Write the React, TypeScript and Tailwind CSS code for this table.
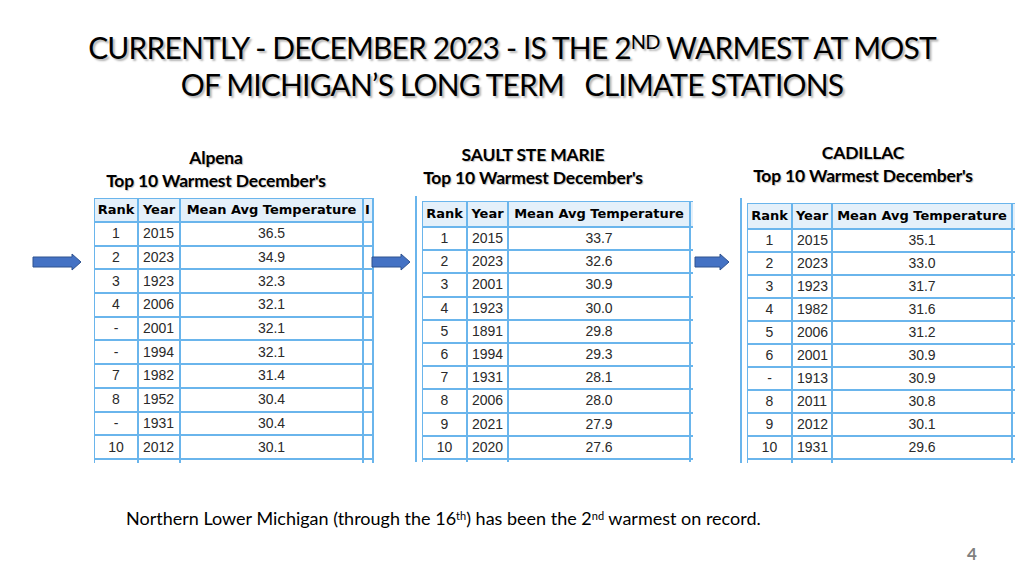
import React from 'react'

type Row = [string, string, string]

const alpena: Row[] = [
  ['1', '2015', '36.5'],
  ['2', '2023', '34.9'],
  ['3', '1923', '32.3'],
  ['4', '2006', '32.1'],
  ['-', '2001', '32.1'],
  ['-', '1994', '32.1'],
  ['7', '1982', '31.4'],
  ['8', '1952', '30.4'],
  ['-', '1931', '30.4'],
  ['10', '2012', '30.1'],
]

const sault: Row[] = [
  ['1', '2015', '33.7'],
  ['2', '2023', '32.6'],
  ['3', '2001', '30.9'],
  ['4', '1923', '30.0'],
  ['5', '1891', '29.8'],
  ['6', '1994', '29.3'],
  ['7', '1931', '28.1'],
  ['8', '2006', '28.0'],
  ['9', '2021', '27.9'],
  ['10', '2020', '27.6'],
]

const cadillac: Row[] = [
  ['1', '2015', '35.1'],
  ['2', '2023', '33.0'],
  ['3', '1923', '31.7'],
  ['4', '1982', '31.6'],
  ['5', '2006', '31.2'],
  ['6', '2001', '30.9'],
  ['-', '1913', '30.9'],
  ['8', '2011', '30.8'],
  ['9', '2012', '30.1'],
  ['10', '1931', '29.6'],
]

function Arrow({ w }: { w: number }) {
  return (
    <svg width={w} height={18} viewBox={`0 0 ${w} 18`} className="block">
      <polygon
        points={`1,4 ${w - 10},4 ${w - 10},1 ${w - 1},9 ${w - 10},17 ${w - 10},14 1,14`}
        fill="#4472c4"
        stroke="#2f528f"
        strokeWidth="1"
      />
    </svg>
  )
}

function ClimateTable({
  rows,
  cols,
  headH,
  rowH,
  extra = '',
}: {
  rows: Row[]
  cols: number[]
  headH: string
  rowH: string
  extra?: string
}) {
  const cell = 'border-2 border-[#6ab5ec] p-0 whitespace-nowrap overflow-hidden'
  const total = cols.reduce((a, b) => a + b, 0)
  return (
    <table className="border-collapse table-fixed -ml-px -mt-px" style={{ width: total }}>
      <colgroup>
        {cols.map((c, i) => (
          <col key={i} style={{ width: c }} />
        ))}
      </colgroup>
      <thead>
        <tr className={`${headH} bg-[#e4f0fa] font-['DejaVu_Sans',sans-serif] font-bold text-[13px] text-black`}>
          <th className={`${cell} text-center`}>Rank</th>
          <th className={`${cell} text-center`}>Year</th>
          <th className={`${cell} text-center`}>Mean Avg Temperature</th>
          <th className={`${cell} text-left pl-px`}>{extra}</th>
        </tr>
      </thead>
      <tbody className="font-['Liberation_Sans',Arial,sans-serif] text-[14px] text-[#2a2a2a]">
        {rows.map((r, i) => (
          <tr key={i} className={rowH}>
            <td className={`${cell} text-center`}>{r[0]}</td>
            <td className={`${cell} text-left pl-[4px]`}>{r[1]}</td>
            <td className={`${cell} text-center`}>{r[2]}</td>
            <td className={cell}></td>
          </tr>
        ))}
        <tr className={rowH}>
          <td className={cell}></td>
          <td className={cell}></td>
          <td className={cell}></td>
          <td className={cell}></td>
        </tr>
      </tbody>
    </table>
  )
}

function Heading({ name, w, mt, mb }: { name: string; w: string; mt: string; mb: string }) {
  return (
    <div
      className={`${w} ${mt} ${mb} text-center font-['Lato',sans-serif] font-bold text-[17.5px] leading-[23px] text-black tracking-[-0.01em] [text-shadow:1px_1px_1px_rgba(0,0,0,0.25)]`}
    >
      <div>{name}</div>
      <div>Top 10 Warmest December's</div>
    </div>
  )
}

export default function App() {
  return (
    <div className="w-[1024px] h-[576px] bg-white flex flex-col overflow-hidden relative">
      {/* Title */}
      <div className="pt-[29px] text-center font-['Lato',sans-serif] text-[30px] leading-[37px] text-black tracking-[-0.028em] [text-shadow:2px_2px_2px_rgba(0,0,0,0.3)]">
        <div>
          CURRENTLY - DECEMBER 2023 - IS THE 2<sup className="text-[20px]">ND</sup> WARMEST AT MOST
        </div>
        <div>OF MICHIGAN’S LONG TERM&nbsp;&nbsp; CLIMATE STATIONS</div>
      </div>

      {/* Tables */}
      <div className="flex items-start mt-[38px]">
        {/* Alpena */}
        <div className="flex items-start pl-[32px]">
          <div className="mt-[112px]">
            <Arrow w={50} />
          </div>
          <div className="ml-[12px] -mr-[4px]">
            <Heading name="Alpena" w="w-[244px]" mt="mt-[5px]" mb="mb-[6px]" />
            <div className="w-[280px] h-[265px] overflow-hidden">
              <ClimateTable rows={alpena} cols={[44, 42, 183, 10]} headH="h-[24px]" rowH="h-[23.7px]" extra="I" />
            </div>
          </div>
        </div>

        {/* Sault Ste Marie */}
        <div className="flex items-start ml-px">
          <div className="mt-[112px]">
            <Arrow w={40} />
          </div>
          <div className="ml-[4px]">
            <Heading name="SAULT STE MARIE" w="w-[236px]" mt="mt-[2px]" mb="mb-[7px]" />
            <div className="border-l-2 border-[#6ab5ec] pl-[5px] pt-[5px] h-[266px]">
              <div className="w-[271px] h-[261px] overflow-hidden">
                <ClimateTable rows={sault} cols={[45, 41, 182, 6]} headH="h-[26px]" rowH="h-[23.2px]" />
              </div>
            </div>
          </div>
        </div>

        {/* Cadillac */}
        <div className="flex items-start ml-px">
          <div className="mt-[112px]">
            <Arrow w={36} />
          </div>
          <div className="ml-[10px]">
            <Heading name="CADILLAC" w="w-[246px]" mt="mt-0" mb="mb-[11px]" />
            <div className="border-l-2 border-[#6ab5ec] pl-[5px] pt-[5px] h-[265px]">
              <div className="w-[268px] h-[260px] overflow-hidden">
                <ClimateTable rows={cadillac} cols={[45, 40, 180, 6]} headH="h-[26px]" rowH="h-[23px]" />
              </div>
            </div>
          </div>
        </div>
      </div>

      {/* Footer note */}
      <div className="mt-[44px] pl-[126px] font-['Lato',sans-serif] text-[18px] leading-[22px] text-black">
        Northern Lower Michigan (through the 16<sup className="text-[11px]">th</sup>) has been the 2
        <sup className="text-[11px]">nd</sup> warmest on record.
      </div>

      <div className="absolute left-[967px] top-[541px] font-['Lato',sans-serif] font-bold text-[17px] text-[#808080]">4</div>
    </div>
  )
}
